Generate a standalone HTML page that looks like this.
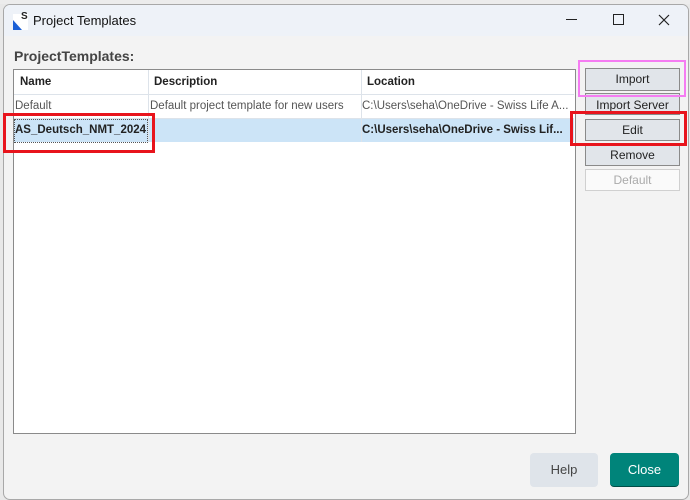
<!DOCTYPE html><html><head><style>
body{margin:0;width:690px;height:499px;background:#e8e8e8;font-family:"Liberation Sans",sans-serif;position:relative;overflow:hidden}
.a{position:absolute}
.win{left:3px;top:4px;width:684px;height:494px;background:#f3f3f3;border:1px solid #a8a8a8;border-radius:7px;overflow:hidden}
.tb{left:0;top:0;width:684px;height:31px;background:#eef2f8}
.btn{position:absolute;left:585px;width:93px;height:21px;background:#e1e5ea;border:1px solid #8a8a8a;font-size:12px;text-align:center;line-height:21px;color:#222;box-sizing:content-box}
</style></head><body>
<div class="a" style="left:0;top:0;width:690px;height:4px;background:#ececec"></div>
<div class="a win">
<div class="a tb"></div>
<div class="a" style="left:9px;top:9px;width:15px;height:16px;background:#fff"></div>
<div class="a" style="left:9px;top:15px;width:0;height:0;border-left:9px solid #1a5fd6;border-top:10px solid transparent"></div>
<div class="a" style="left:17px;top:6px;font-size:10px;font-weight:bold;color:#222">S</div>
<div class="a" style="left:29px;top:8px;font-size:13px;color:#111">Project Templates</div>
<div class="a" style="left:562px;top:14px;width:11px;height:1px;background:#222"></div>
<div class="a" style="left:609px;top:9px;width:9px;height:9px;border:1px solid #222"></div>
<svg class="a" style="left:654px;top:9px" width="12" height="12"><path d="M1 1L11 11M11 1L1 11" stroke="#222" stroke-width="1.2"/></svg>
<div class="a" style="left:10px;top:43px;font-size:14px;font-weight:bold;color:#444">ProjectTemplates:</div>
</div>
<div class="a" style="left:13px;top:69px;width:561px;height:363px;background:#fff;border:1px solid #8a8a8a"></div>
<div class="a" style="left:14px;top:94px;width:560px;height:1px;background:#dde3ea"></div>
<div class="a" style="left:14px;top:118px;width:560px;height:1px;background:#dde3ea"></div>
<div class="a" style="left:14px;top:119px;width:560px;height:23px;background:#cce4f7"></div>
<div class="a" style="left:148px;top:70px;width:1px;height:72px;background:#dde3ea"></div>
<div class="a" style="left:361px;top:70px;width:1px;height:72px;background:#dde3ea"></div>
<div class="a" style="left:20px;top:76px;font-size:11.5px;font-weight:bold;color:#222">Name</div>
<div class="a" style="left:154px;top:76px;font-size:11.5px;font-weight:bold;color:#222">Description</div>
<div class="a" style="left:367px;top:76px;font-size:11.5px;font-weight:bold;color:#222">Location</div>
<div class="a" style="left:15px;top:100px;font-size:11.5px;color:#555">Default</div>
<div class="a" style="left:150px;top:100px;font-size:11.5px;color:#555">Default project template for new users</div>
<div class="a" style="left:362px;top:100px;font-size:11.5px;color:#555">C:\Users\seha\OneDrive - Swiss Life A...</div>
<div class="a" style="left:14px;top:119px;width:132px;height:22px;border:1px dotted #555"></div>
<div class="a" style="left:15px;top:124px;font-size:11.5px;font-weight:bold;color:#222">AS_Deutsch_NMT_2024</div>
<div class="a" style="left:362px;top:124px;font-size:11.5px;font-weight:bold;color:#222">C:\Users\seha\OneDrive - Swiss Lif...</div>
<div class="btn" style="top:68px">Import</div>
<div class="btn" style="top:93px;height:20px;line-height:22px">Import Server</div>
<div class="btn" style="top:119px;height:20px;line-height:20px">Edit</div>
<div class="btn" style="top:144px;height:20px;line-height:20px">Remove</div>
<div class="btn" style="top:169px;height:20px;line-height:20px;background:#fafafa;border-color:#d0d0d0;color:#aaa">Default</div>
<div class="a" style="left:578px;top:60px;width:104px;height:33px;border:2px solid #f57cf2"></div>
<div class="a" style="left:570px;top:111px;width:111px;height:29px;border:3px solid #e8141c"></div>
<div class="a" style="left:3px;top:113px;width:146px;height:34px;border:3px solid #e8141c"></div>
<div class="a" style="left:530px;top:453px;width:68px;height:34px;background:#dfe4ea;border-radius:4px;font-size:13px;text-align:center;line-height:34px;color:#444">Help</div>
<div class="a" style="left:610px;top:453px;width:69px;height:34px;background:#00847a;border-radius:4px;font-size:13px;text-align:center;line-height:34px;color:#fff;border-bottom:1px solid #004d47;box-sizing:border-box">Close</div>
</body></html>
